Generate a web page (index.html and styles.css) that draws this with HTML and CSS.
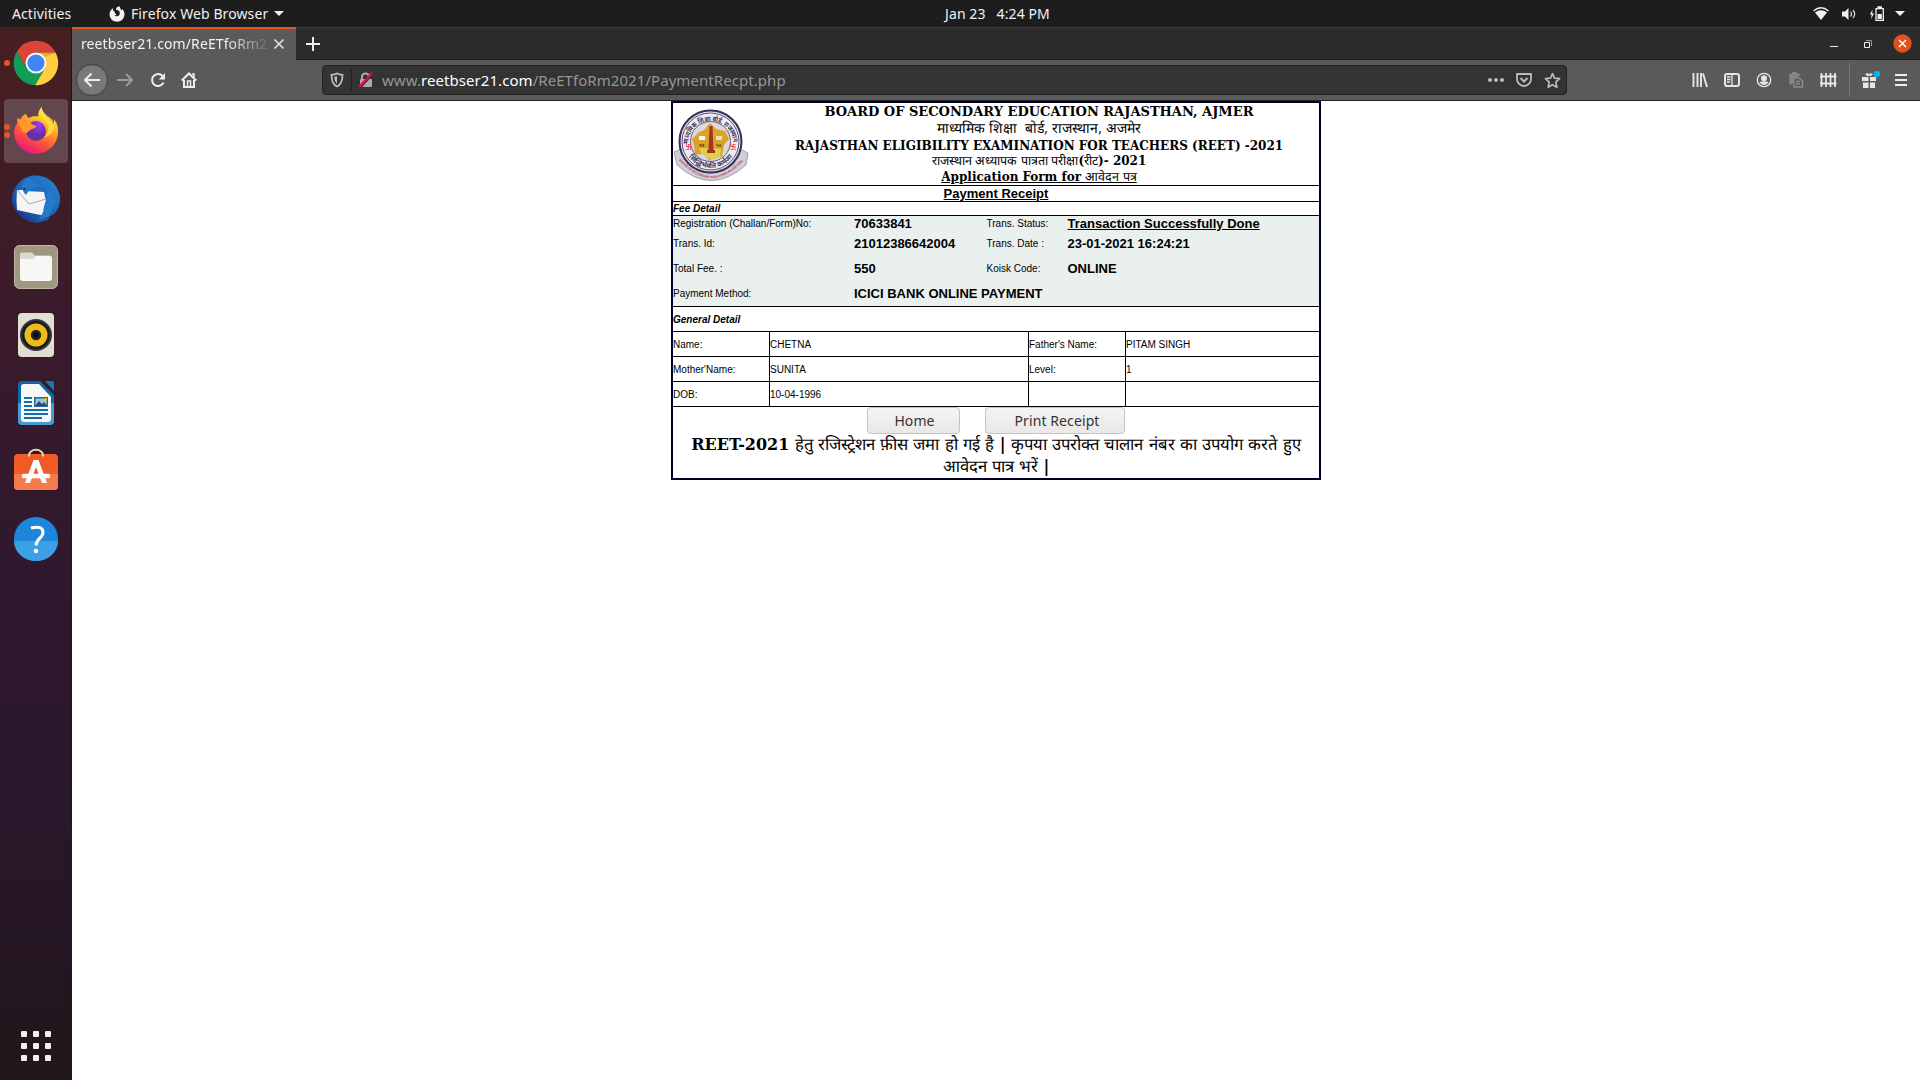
FILE: index.html
```html
<!DOCTYPE html>
<html lang="en">
<head>
<meta charset="utf-8">
<title>Payment Receipt</title>
<link rel="stylesheet" href="styles.css">
</head>
<body>
<header class="topbar">
  <span class="activities">Activities</span>
  <svg class="app-icon" width="16" height="16" viewBox="0 0 16 16"><path d="M8 1.2C7.2 2 7 2.7 7.3 4c1 .1 2 .2 2.800 1C11 6 11 8 10.200 9.200 9 10.800 6.500 10.600 5.500 9.200 6.500 9.300 7.300 8.900 7.600 8.200 6.200 8 5.600 7 5.900 6L4.300 4.800 3.800 2.200C2.300 3.500.5 5.500.5 8.500a7.500 7.300 0 0 0 15 0c0-2.600-1-4.500-2.300-5.600l-.4 1.500C11.500 3 10.800 1.500 10.600.2 9.600.7 8.600 1 8 1.200z" fill="#f2f2f2"/></svg>
  <span class="app-name">Firefox Web Browser</span>
  <i class="caret"></i>
  <span class="clock"><span>Jan 23</span><span>4:24 PM</span></span>
  <div class="tray">
    <svg width="16" height="14" viewBox="0 0 16 14"><path d="M.5 4Q8-2.500 15.500 4" fill="none" stroke="#f2f2f2" stroke-width="1.300"/><path d="M2 5.500Q8 .8 14 5.500L8 13z" fill="#f2f2f2"/></svg>
    <svg width="16" height="14" viewBox="0 0 16 14"><path d="M1 4.500h3L7.500 1v12L4 9.500H1z" fill="#f2f2f2"/><path d="M9.500 4.500q2 2.500 0 5M12 3q3.300 4 0 8" fill="none" stroke="#ddd" stroke-width="1.200"/></svg>
    <svg width="16" height="16" viewBox="0 0 16 16"><path d="M3.500 3.500 1 8.500h1.700L2 13l3-5.500H3.200z" fill="#f2f2f2"/><path d="M7 2.700h7.300v11.600H7zM9 1h3.300v1H9z" fill="none" stroke="#f2f2f2" stroke-width="1.300"/><path d="M8.500 8h4.300v5H8.500z" fill="#f2f2f2"/></svg>
    <i class="caret"></i>
  </div>
</header>

<div class="desktop">
<nav class="dock">
  <div class="launcher"><i class="dot"></i>
    <svg width="48" height="48" viewBox="-24 -24 48 48"><path d="M-19.300-11.200A22.300 22.300 0 0 1 19.700-10.500L0-10.500-9.100 5.200z" fill="#db4437"/><path d="M-19.300-11.200A22.300 22.300 0 0 0-1 22.300L9.100 5.200-9.100 5.200z" fill="#119d58"/><path d="M19.700-10.200A22.300 22.300 0 0 1-1 22.300L9.100 5.200 4-10.200z" fill="#ffcd40"/><path d="M0-10.200h19.700L6-5z" fill="#e8a92a"/><circle r="10.500" fill="#f4f6fa"/><circle r="8.600" fill="#4285f4"/></svg></div>
  <div class="launcher active"><i class="dot"></i><i class="dot"></i>
    <svg width="48" height="48" viewBox="0 0 48 48"><defs><linearGradient id="ff" x1=".8" y1="0" x2=".3" y2="1"><stop offset=".1" stop-color="#fff044"/><stop offset=".35" stop-color="#ffb42b"/><stop offset=".65" stop-color="#ff5a36"/><stop offset="1" stop-color="#e8117f"/></linearGradient><radialGradient id="fg" cx=".65" cy=".2"><stop offset="0" stop-color="#a23bf0"/><stop offset="1" stop-color="#6432a8"/></radialGradient></defs>
    <path d="M29.500 0c-2.500 3-3.500 6-3.300 9.500-4-.5-7 0-9.500 1.500-2-1.500-2.500-2.700-2.400-4.300C11.500 8 9.500 10 8.500 12.500L5.500 11C5 13 5 15 5.100 16.600 2.500 20 2 23 2 25.500A22 21.500 0 0 0 46 25c.3-6-1.500-10-4.500-13 1 3 .5 5-.5 6C38 10 30.500 8 29.500 0z" fill="url(#ff)"/><circle cx="24" cy="24" r="10" fill="url(#fg)"/><path d="M5.500 12c4 2 6 .5 9.500 1.700 3 1 4.500 4.300 9 5 .8 2.300-4.300 3-6 4.300-2.500 2-3.500 5-8 1z" fill="#ff9927"/><path d="M29.500 0c-3 6 .5 10.500 4 14 5 5 3 13-2 17 11-3 12-12 9.500-17C38 9 30.500 8 29.500 0z" fill="#ffe13d" opacity=".8"/></svg></div>
  <div class="launcher">
    <svg width="48" height="48" viewBox="0 0 48 48"><defs><linearGradient id="tb" x1="1" y1="0" x2="0" y2="1"><stop offset="0" stop-color="#2487d8"/><stop offset=".7" stop-color="#1b55a5"/><stop offset="1" stop-color="#27145c"/></linearGradient></defs><path d="M18 1C30-1 44 4 48 21c.5 8-2 14-6 18l-4 2-2 4-4 1-7 2C8 46-2 35 .3 20 2 13 7 6 13 3z" fill="url(#tb)"/><path d="M5 15c3 1 6-2 9 1l18 1 3 14-2 10L5 35Q4 25 5 15z" fill="#f5f5f6"/><path d="M6 16l11 13 17-5" fill="none" stroke="#aaa" stroke-width="1"/><path d="M15 3C8 7 9 15 14 20c3-6 8-6 12-10l-4-5zM34 10c4 9-2 18-3 27l-4 8 10-4 8-15z" fill="#2379cb"/><circle cx="12.500" cy="14" r="1.300" fill="#143d76"/></svg></div>
  <div class="launcher">
    <svg width="48" height="48" viewBox="0 0 48 48"><rect x="2.500" y="2.500" width="43" height="43" rx="5" fill="#a09781" stroke="#beb7a5"/><path d="M8 11q0-1.500 2-1.500h10l3 3h14q3 0 3 3V20H8z" fill="#ddd8cd"/><path d="M8 16h13l3-3h13q3 0 3 3v19q0 3-3 3H11q-3 0-3-3z" fill="#f8f7f6"/></svg></div>
  <div class="launcher">
    <svg width="48" height="48" viewBox="0 0 48 48"><rect x="6" y="2" width="36" height="44" rx="4" fill="#e2ded2"/><circle cx="24" cy="24" r="16" fill="#35363b"/><circle cx="24" cy="24" r="14" fill="#191b22"/><circle cx="24" cy="24" r="11.500" fill="#efbb16"/><circle cx="24" cy="24" r="5.200" fill="#25272a"/><circle cx="24" cy="24" r="2.500" fill="#08090b"/></svg></div>
  <div class="launcher">
    <svg width="48" height="48" viewBox="0 0 48 48"><path d="M10 2h18l14 14v26q0 4-4 4H10q-4 0-4-4V6q0-4 4-4z" fill="#0b6ba4"/><path d="M6 24h36v18q0 4-4 4H10q-4 0-4-4z" fill="#499dce"/><path d="M33 2h7q2 0 2 2v8z" fill="#1c76b0"/><path d="M9 8q0-3 3-3h15l12 13v22q0 3-3 3H12q-3 0-3-3z" fill="#f7f7f7"/><path d="M12 19h8M12 23h8M12 27h8M12 31h24M12 35h24M12 39h18" stroke="#106ea8" stroke-width="2"/><rect x="22" y="18" width="14" height="10" fill="#106ea8"/><path d="M23.500 19.500h11V27h-11z" fill="#8cc8ef"/><path d="M23 27l4-5 3 3 2-2 3 4z" fill="#444"/><path d="M32 19h3v4z" fill="#fb0"/></svg></div>
  <div class="launcher">
    <svg width="48" height="48" viewBox="0 0 48 48"><g transform="translate(0 -3)"><rect x="2" y="10" width="44" height="36" rx="4" fill="#f05b26"/><path d="M2 30h44v12q0 4-4 4H6q-4 0-4-4z" fill="#f47b4c"/><path d="M17 12.500c-1-9 15-9 14 0" fill="none" stroke="#ead5ad" stroke-width="2"/><path d="M21.500 16h5L35 39h-5l-6-16-6 16h-5z" fill="#fff"/><path d="M12 32h24" stroke="#fff" stroke-width="4.500" stroke-linecap="round"/></g></svg></div>
  <div class="launcher">
    <svg width="48" height="48" viewBox="0 0 48 48"><circle cx="24" cy="24" r="22" fill="#1c86db"/><path d="M2 26a22 20 0 0 0 44 0z" fill="#3ba0e4"/><path d="M19 13q12-3 12 4.500c0 5.500-7 6-7 13" fill="none" stroke="#fff" stroke-width="3"/><circle cx="24" cy="36" r="2.300" fill="#fff"/></svg></div>
  <div class="apps"><i></i><i></i><i></i><i></i><i></i><i></i><i></i><i></i><i></i></div>
</nav>

<main class="browser">
  <div class="tabs">
    <div class="tab"><span>reetbser21.com/ReETfoRm2</span><svg width="12" height="12" viewBox="0 0 12 12"><path d="M1.500 1.500l9 9m0-9l-9 9" stroke="#e4e4e4" stroke-width="1.600"/></svg></div>
    <svg class="new-tab" width="16" height="16" viewBox="0 0 16 16"><path d="M8 1v14M1 8h14" stroke="#eee" stroke-width="2"/></svg>
    <div class="window-buttons">
      <svg width="10" height="14" viewBox="0 0 10 14"><path d="M1 9.500h8" stroke="#eee"/></svg>
      <svg width="10" height="10" viewBox="0 0 10 10"><path d="M1.500 3.500h5v5h-5z" fill="none" stroke="#f4f4f4"/><path d="M3 1.500h5.500V7" fill="none" stroke="#999"/></svg>
      <svg width="19" height="19" viewBox="0 0 19 19"><circle cx="9.500" cy="9.500" r="9.200" fill="#e2501d"/><path d="M6 6l7 7m0-7l-7 7" stroke="#fff" stroke-width="1.500"/></svg>
    </div>
  </div>
  <div class="toolbar">
    <div class="back"><svg width="18" height="16" viewBox="0 0 18 16"><path d="M17 8H2m6.500-6.500L2 8l6.500 6.500" fill="none" stroke="#f0f0f0" stroke-width="2"/></svg></div>
    <svg class="fwd" width="16" height="16" viewBox="0 0 16 16"><path d="M0 8h14.500M9 2l6 6-6 6" fill="none" stroke="#999" stroke-width="2"/></svg>
    <svg class="reload" width="16" height="16" viewBox="0 0 16 16"><path d="M12.500 4A6 6 0 1 0 13.500 10.500" fill="none" stroke="#eee" stroke-width="2"/><path d="M15 1v6.500H8.800z" fill="#eee"/></svg>
    <svg class="home" width="16" height="16" viewBox="0 0 16 16"><path d="M.8 8.500L8 1.500l7.200 7M3 8v7h10V8" fill="none" stroke="#eee" stroke-width="2"/><path d="M6.500 15V9h3v6M11 2h2v3" fill="none" stroke="#eee" stroke-width="1.500"/></svg>
    <div class="urlbar">
      <svg width="14" height="16" viewBox="0 0 14 16"><path d="M1.500 2.800Q5 2.500 7 1.500q2 1 5.500 1.300C12.500 9 11 13 7 14.500 3 13 1.500 9 1.500 2.800z" fill="none" stroke="#bbb" stroke-width="1.800"/><path d="M7 4.200v7.600C5 10.500 4.400 7.500 4.300 4.800z" fill="#bbb"/></svg>
      <i class="rule"></i>
      <svg class="lock" width="16" height="16" viewBox="0 0 16 16"><path d="M4 8V5q0-3.500 3.500-3.500T11 5v3" fill="none" stroke="#aaa" stroke-width="2"/><rect x="2" y="7" width="12" height="8" rx="1" fill="#aaa"/><path d="M2.500 15.800L15 2" stroke="#333" stroke-width="1.500"/><path d="M1 14.800L14 1" stroke="#ff0039" stroke-width="2"/></svg>
      <span class="address">www.<b>reetbser21.com</b>/ReETfoRm2021/PaymentRecpt.php</span>
      <div class="url-actions">
        <svg width="16" height="16" viewBox="0 0 16 16" fill="#bbb"><circle cx="2" cy="8" r="2"/><circle cx="8" cy="8" r="2"/><circle cx="14" cy="8" r="2"/></svg>
        <svg width="16" height="16" viewBox="0 0 16 16"><path d="M1 2h14v5a7 7 0 0 1-14 0z" fill="none" stroke="#bbb" stroke-width="1.800" stroke-linejoin="round"/><path d="M4.500 6L8 9.500 11.500 6" fill="none" stroke="#bbb" stroke-width="2"/></svg>
        <svg width="17" height="17" viewBox="0 0 16 16"><path d="M8 1.500l1.900 4.300 4.800.5-3.600 3.200 1 4.800L8 11.900l-4.100 2.400 1-4.800L1.300 6.300l4.800-.5z" fill="none" stroke="#bbb" stroke-width="1.600" stroke-linejoin="round"/></svg>
      </div>
    </div>
    <div class="tools">
      <svg width="16" height="16" viewBox="0 0 16 16"><path d="M1.500 1v14M5.500 1v14M9 1v14M11 1.500l4 13.500" stroke="#e6e6e6" stroke-width="1.900"/></svg>
      <svg width="16" height="16" viewBox="0 0 16 16"><rect x="1" y="2" width="14" height="12" rx="2" fill="none" stroke="#e6e6e6" stroke-width="2"/><path d="M8 2v12M3 5h3.500M3 7.500h3.500M3 10h3" stroke="#e6e6e6" stroke-width="1.300"/></svg>
      <svg width="16" height="16" viewBox="0 0 16 16"><circle cx="8" cy="8" r="6.700" fill="none" stroke="#e6e6e6" stroke-width="1.300"/><circle cx="8" cy="6.200" r="3" fill="#e6e6e6"/><path d="M3.500 10Q8 8.500 12.500 10 11 13 8 13t-4.500-3z" fill="#e6e6e6"/></svg>
      <svg width="16" height="16" viewBox="0 0 16 16" fill="none" stroke="#8b8b8b" stroke-width="1.500"><path d="M4.500 11.500H2V2.500h9V4M4 1h5"/><path d="M3 3.500h7V5H5v6H3z" fill="#8b8b8b" stroke="none"/><path d="M6 6h5l3.500 3v6H6zM8 9.500h4M8 12h4"/></svg>
      <svg width="18" height="16" viewBox="0 0 18 16"><path d="M2.500 1v14M7 1v14M11.500 1v14M16 1v14M1 4.500h16.500M1 11.500h16.500" stroke="#e6e6e6" stroke-width="1.800"/></svg>
      <i class="rule"></i>
      <svg class="gift" width="20" height="20" viewBox="0 0 20 20"><path d="M1 7h6.500v4H1zM9 7h6v4H9zM2 12.500h5.500V18H2zM9 12.500h5V18H9zM4 4l3-1 1 2 1-2 3 1-2 2H6z" fill="#e6e6e6"/><circle cx="16" cy="4" r="3.200" fill="#00b3f4"/></svg>
      <svg width="14" height="14" viewBox="0 0 14 14"><path d="M1 2h12M1 7h12M1 12h12" stroke="#eee" stroke-width="2"/></svg>
    </div>
  </div>

  <div class="page">
    <section class="receipt">
      <div class="heading">
        <svg class="seal" width="76" height="78" viewBox="0 0 76 78">
          <defs><path id="arcTop" d="M14.500 41a22.500 22.500 0 1 1 44.500 0"/><path id="arcLow" d="M9.500 35a27 27 0 0 0 54 0"/><path id="arcBand" d="M5 54Q37 90 70 54"/></defs>
          <path d="M0 46l7-3 6 15Q37 76 60 58l6-15 8 4-2 12Q37 90 3 59z" fill="#cfced8" stroke="#868597" stroke-width=".7"/>
          <circle cx="36.500" cy="35.500" r="31" fill="#e8e4ef" stroke="#393052" stroke-width="2"/>
          <circle cx="36.500" cy="35.500" r="28.500" fill="#eeeaf3" stroke="#5c5279" stroke-width="1"/>
          <circle cx="36.500" cy="35.500" r="20" fill="#dcd9de" stroke="#675e7c"/>
          <path d="M18 33l7-7 5-2 6-7 6 6 9 2 4 8-5 6-2 12-9-1-3 5-7-7-8 1-1-10z" fill="#dca32b"/>
          <path d="M25 42l22 1-1 8-9 3-9-6z" fill="#dfd14e"/>
          <path d="M35.500 20h3l1 24h-5zM33 44h8v3h-8z" fill="#a83222"/>
          <path d="M25 30h6v4h-6z" fill="#fafafa"/><path d="M42 30h6v4h-6z" fill="#e8e2c0"/>
          <g class="seal-number"><text x="25" y="41">११</text><text x="42" y="41">५०</text></g>
          <g class="seal-mark"><text x="11.500" y="43">卐</text><text x="56" y="43">卐</text></g>
          <text class="seal-text"><textPath href="#arcTop" startOffset="3" textLength="69" lengthAdjust="spacingAndGlyphs">माध्यमिक शिक्षा बोर्ड, राजस्थान</textPath></text>
          <text class="seal-text"><textPath href="#arcLow" startOffset="17" textLength="51" lengthAdjust="spacingAndGlyphs">सिद्धिर्भवति कर्मजा</textPath></text>
          <text class="seal-band"><textPath href="#arcBand" textLength="75">BOARD OF SECONDARY EDUCATION RAJASTHAN</textPath></text>
        </svg>
        <div class="titles">
          <div class="t1">BOARD OF SECONDARY EDUCATION RAJASTHAN, AJMER</div>
          <div class="t2">माध्यमिक शिक्षा&nbsp; बोर्ड, राजस्थान, अजमेर</div>
          <div class="t3">RAJASTHAN ELIGIBILITY EXAMINATION FOR TEACHERS (REET) -2021</div>
          <div class="t4"><span class="hindi">राजस्थान अध्यापक पात्रता परीक्षा</span>(<span class="hindi">रीट</span>)- 2021</div>
          <div class="t5"><u>Application Form for <span class="hindi">आवेदन पत्र</span></u></div>
        </div>
      </div>
      <div class="subtitle"><u>Payment Receipt</u></div>
      <div class="section fee-title">Fee Detail</div>
      <div class="fees">
        <span>Registration (Challan/Form)No:</span><b>70633841</b><span>Trans. Status:</span><b><u>Transaction Successfully Done</u></b>
        <span>Trans. Id:</span><b>21012386642004</b><span>Trans. Date :</span><b>23-01-2021 16:24:21</b>
        <span>Total Fee. :</span><b>550</b><span>Koisk Code:</span><b>ONLINE</b>
        <span>Payment Method:</span><b class="wide">ICICI BANK ONLINE PAYMENT</b>
      </div>
      <div class="section general-title">General Detail</div>
      <div class="details">
        <span>Name:</span><span>CHETNA</span><span>Father's Name:</span><span>PITAM SINGH</span>
        <span>Mother'Name:</span><span>SUNITA</span><span>Level:</span><span>1</span>
        <span>DOB:</span><span>10-04-1996</span><span></span><span></span>
      </div>
      <div class="actions"><button class="home-button">Home</button><button class="print-button">Print Receipt</button></div>
      <div class="notice"><div class="n1"><b>REET-2021</b> हेतु रजिस्ट्रेशन फ़ीस जमा हो गई है <b>|</b> कृपया उपरोक्त चालान नंबर का उपयोग करते हुए</div><div class="n2">आवेदन पात्र भरें <b>|</b></div></div>
    </section>
  </div>
</main>
</div>
</body>
</html>
```
FILE: styles.css
```css
* { box-sizing: border-box; }
body { margin: 0; width: 1920px; height: 1080px; overflow: hidden; background: #fff; font-family: "Noto Sans", sans-serif; display: flex; flex-direction: column; }
svg { display: block; flex: none; }
.topbar { height: 27px; flex: none; background: #1d1d1d; color: #f0f0f0; display: flex; align-items: center; padding: 0 15px 0 12px; font-size: 14px; line-height: 25px; white-space: nowrap; }
.topbar > span { height: 26px; }
.activities { width: 97px; letter-spacing: .1px; }
.app-name { margin-left: 6px; width: 143px; letter-spacing: .1px; }
.caret { border: 5px solid transparent; border-top-color: #f0f0f0; border-bottom: 0; width: 0; height: 0; }
.clock { margin-left: 661px; display: flex; gap: 11px; letter-spacing: .1px; }
.tray { margin-left: auto; display: flex; align-items: center; gap: 12px; }
.tray .caret { margin-left: -2px; }
.desktop { flex: 1; display: flex; min-height: 0; }
.dock { width: 72px; flex: none; background: linear-gradient(#471f21, #3b1b2a 25%, #30182e 50%, #29172b 75%, #21161a); padding: 4px 4px 19px; display: flex; flex-direction: column; gap: 4px; border-right: 1px solid #24151d; }
.launcher { position: relative; width: 64px; height: 64px; flex: none; display: flex; align-items: center; justify-content: center; border-radius: 4px; }
.active { background: #62474f; }
.dot { position: absolute; left: 0; top: 29px; width: 6px; height: 6px; border-radius: 50%; background: #e95420; }
.active .dot { top: 25px; }
.active .dot + .dot { top: 33px; }
.apps { margin: auto auto 0 17px; display: grid; grid-template-columns: repeat(3, 6px); gap: 6px; }
.apps i { height: 6px; border-radius: 1px; background: #f1f0ed; }
.browser { flex: 1; min-width: 0; display: flex; flex-direction: column; }
.tabs { height: 33px; flex: none; background: #2b2b2b; display: flex; align-items: center; border-top: 1px solid #3c3c3c; border-bottom: 1px solid #1e1e1e; }
.tab { width: 224px; height: 33px; margin-top: -1px; align-self: flex-start; background: #5a5a5a; border-top: 2px solid #e95420; display: flex; align-items: center; padding: 0 11px 2px 9px; justify-content: space-between; color: #f2f2f2; font-size: 14px; letter-spacing: .1px; }
.tab span { width: 188px; white-space: nowrap; -webkit-mask-image: linear-gradient(90deg, #000 145px, transparent 192px); }
.new-tab { margin-left: 9px; }
.window-buttons { margin-left: auto; display: flex; align-items: center; gap: 24px; padding-right: 8px; }
.window-buttons svg:last-child { margin-left: -4px; }
.toolbar { height: 41px; flex: none; background: #5a5a5a; border-bottom: 1px solid #242424; display: flex; align-items: center; padding: 0 12px 0 4px; }
.back { width: 32px; height: 32px; border-radius: 50%; border: 1px solid #3e3e3e; background: #797979; display: flex; align-items: center; justify-content: center; }
.fwd { margin-left: 9px; }
.reload { margin-left: 17px; }
.home { margin-left: 15px; }
.urlbar { width: 1245px; height: 30px; margin-left: 125px; background: #333; border: 1px solid #222; border-radius: 4px; display: flex; align-items: center; padding: 0 5px 0 7px; color: #969696; font-size: 15px; }
.rule { width: 1px; height: 22px; background: #222; margin: 0 7px; }
.lock { margin-left: -1px; }
.address { margin-left: 8px; white-space: nowrap; letter-spacing: .06px; }
.address b { font-weight: 400; color: #fff; }
.url-actions { margin-left: auto; display: flex; align-items: center; gap: 12px; }
.tools { margin-left: auto; display: flex; align-items: center; gap: 16px; }
.tools .rule { height: 34px; background: #777; margin: 0 -5px 0 -4px; }
.tools svg:nth-child(5) { margin-left: -1px; }
.gift { margin-right: -3px; }
.page { flex: 1; padding-left: 599px; background: #fff; }
.receipt { width: 650px; height: 379px; border: 2px solid #00002b; color: #000; font-family: "Liberation Sans", Arial, sans-serif; font-size: 10px; display: flex; flex-direction: column; }
.heading { height: 83px; border-bottom: 1px solid #000; display: flex; }
.seal { margin: 3px 0 0 1px; }
.seal-text { font: bold 7px "Noto Sans Devanagari", "Noto Sans", sans-serif; fill: #40385a; }
.seal-number { font: bold 5px "Noto Sans Devanagari", "Noto Sans", sans-serif; fill: #493713; }
.seal-mark { font: bold 6px "Noto Sans CJK SC", sans-serif; fill: #e3324c; }
.seal-band { font: bold 3px "Liberation Sans", sans-serif; fill: #b42d42; }
.titles { width: 560px; margin-left: auto; text-align: center; font: bold 13.330px "DejaVu Serif Condensed", "DejaVu Serif", serif; font-stretch: condensed; white-space: nowrap; }
.titles div { height: 17px; line-height: 17px; }
.titles .t1 { font: bold 13.030px/17px "DejaVu Serif", serif; font-stretch: normal; }
.titles .t2 { font-weight: 400; font-size: 14px; height: 17px; }
.titles .t3 { height: 16px; }
.titles .t4 { height: 16px; line-height: 15px; }
.titles .t5 { height: 16px; line-height: 15px; }
.hindi { font-weight: 400; font-size: 12.500px; }
.subtitle { height: 16px; border-bottom: 1px solid #000; text-align: center; font-size: 13px; font-weight: bold; line-height: 15px; }
.section { font-weight: bold; font-style: italic; border-bottom: 1px solid #000; }
.fee-title { height: 14px; line-height: 13px; }
.general-title { height: 25px; line-height: 26px; }
.fees { height: 91px; border-bottom: 1px solid #000; background: #eaf0ee; display: grid; grid-template-columns: 181px 132.500px 81px 1fr; grid-template-rows: 15px 25px 25px 25px; align-items: center; white-space: nowrap; }
.fees b { font-size: 13px; }
.fees .wide { grid-column: span 3; }
.details { display: grid; grid-template-columns: 96px 259px 97px 194px; grid-template-rows: repeat(3, 25px); }
.details span { border-bottom: 1px solid #000; border-left: 1px solid #000; line-height: 26px; height: 25px; }
.details span:nth-child(4n+1) { border-left: 0; }
.actions { height: 27px; display: flex; gap: 25px; padding-left: 194px; }
.actions button { height: 27px; border: 1px solid #c8c3be; border-radius: 4px; background: linear-gradient(#f5f4f3, #eae8e7); color: #333; font: 14px "Noto Sans", sans-serif; padding: 0 0 0 2px; letter-spacing: .1px; }
.home-button { width: 93px; }
.actions .print-button { width: 140px; padding-left: 4px; }
.notice { text-align: center; font: 16.640px/22px "DejaVu Serif", serif; white-space: nowrap; }
.notice div { height: 22px; line-height: 21px; }
.notice b { font-size: 16px; }
```
